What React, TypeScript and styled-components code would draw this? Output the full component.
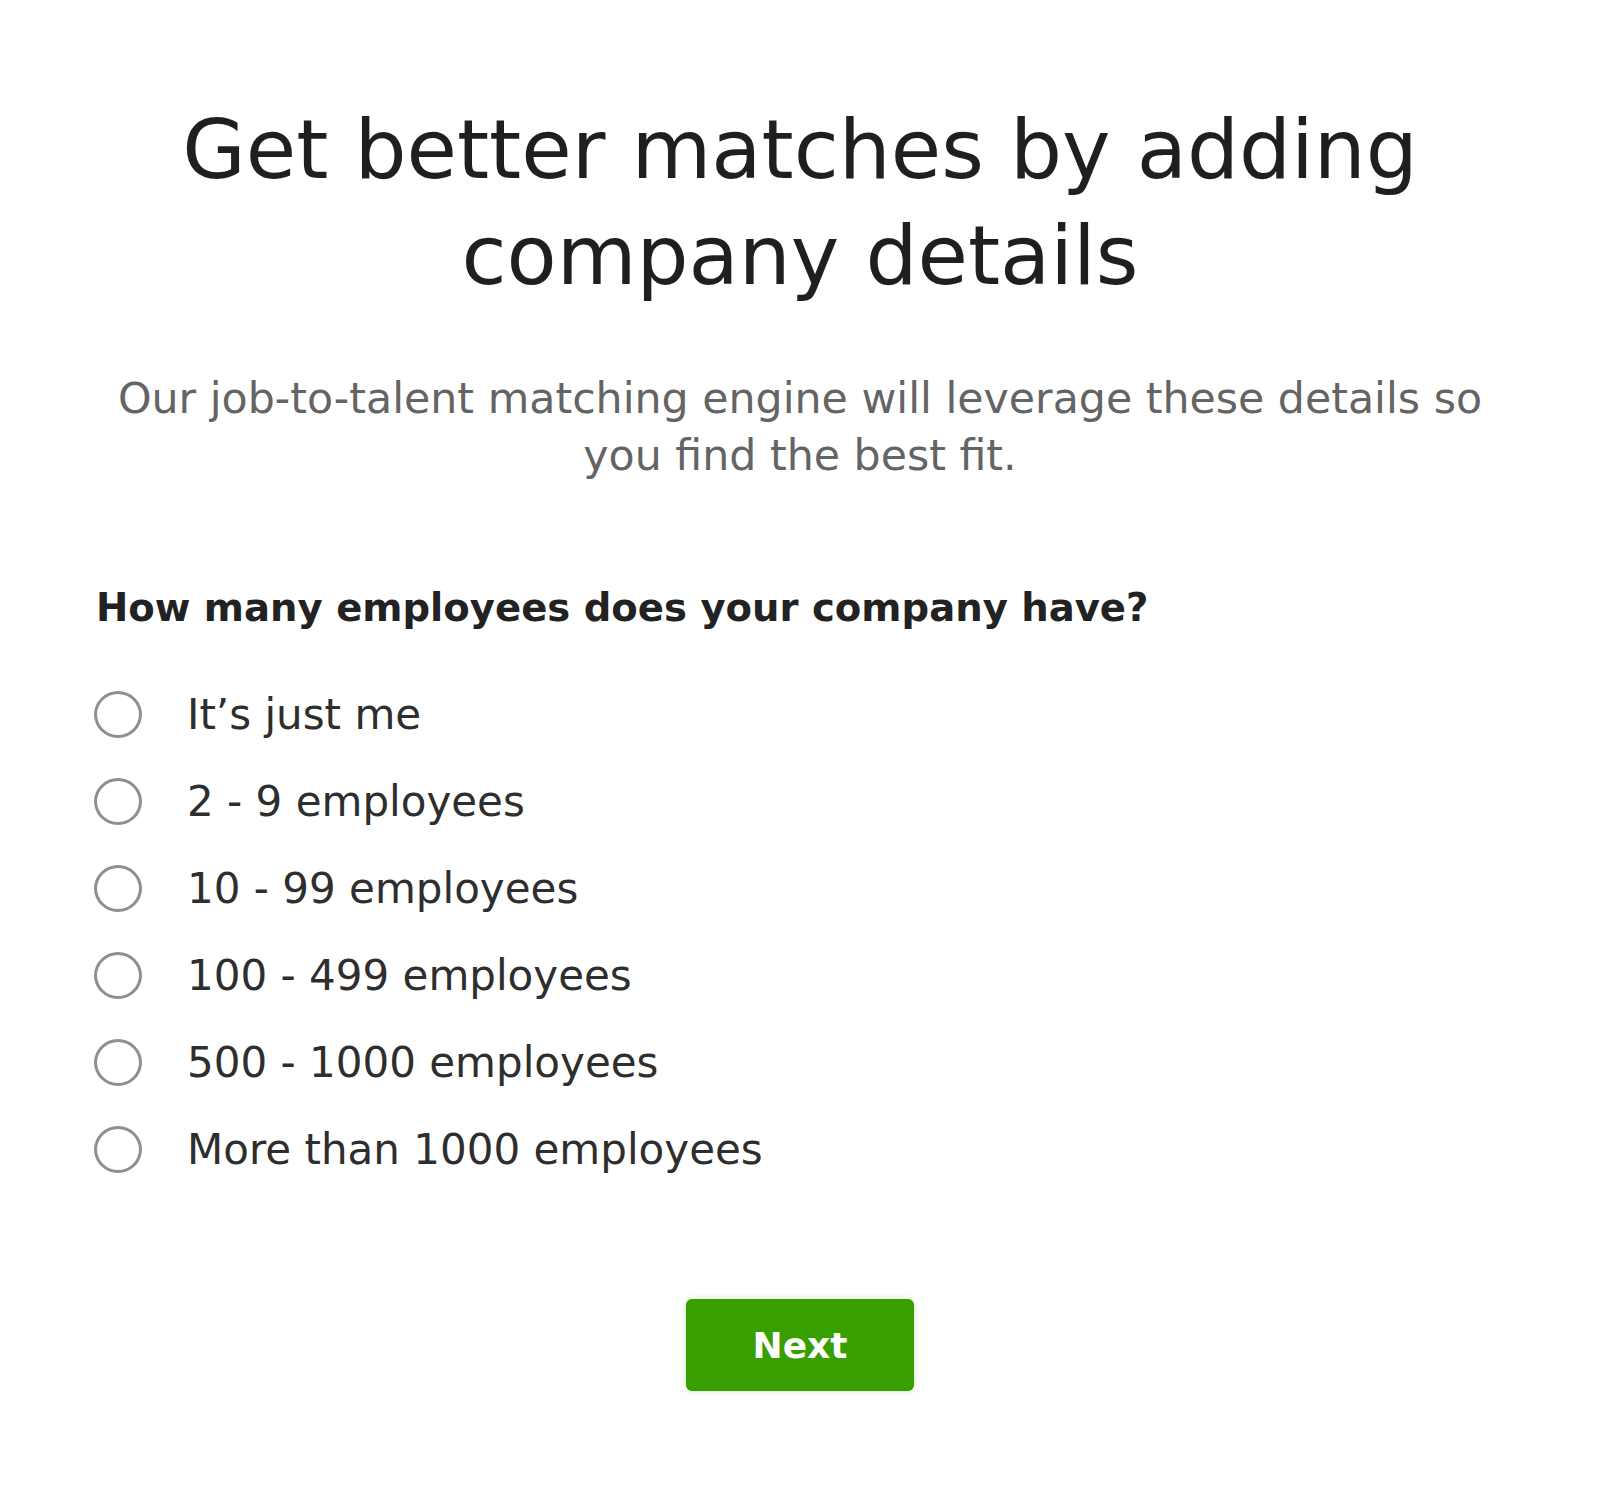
import React, { useState } from "react";
import styled, { createGlobalStyle } from "styled-components";

const GlobalStyle = createGlobalStyle`
  html, body {
    margin: 0;
    padding: 0;
    background: #ffffff;
  }
  body {
    font-family: "DejaVu Sans", "Liberation Sans", sans-serif;
    color: #222222;
  }
`;

const Page = styled.main`
  width: 1412px;
  margin: 0 auto;
  padding: 97px 0 80px;
  display: flex;
  flex-direction: column;
  align-items: center;
`;

const Title = styled.h1`
  margin: 0;
  width: 1300px;
  font-size: 82px;
  line-height: 106px;
  font-weight: 400;
  color: #1f1f1f;
  text-align: center;
`;

const Subtitle = styled.p`
  margin: 61px 0 0;
  width: 1412px;
  font-size: 42.7px;
  line-height: 57px;
  font-weight: 400;
  color: #646464;
  text-align: center;
`;

const Form = styled.form`
  align-self: stretch;
  margin-top: 101px;
  display: flex;
  flex-direction: column;
`;

const Question = styled.h2`
  margin: 0 0 40px 2px;
  font-size: 38.6px;
  line-height: 46px;
  font-weight: 700;
  color: #222222;
`;

const OptionList = styled.div`
  display: flex;
  flex-direction: column;
`;

const OptionRow = styled.label`
  height: 87px;
  display: flex;
  align-items: center;
  gap: 45px;
  cursor: pointer;
`;

const RadioCircle = styled.span<{ $checked: boolean }>`
  width: 48px;
  height: 47px;
  box-sizing: border-box;
  border-radius: 50%;
  border: 3px solid #8f8f8f;
  background: #fff;
  flex: 0 0 auto;
  display: flex;
  align-items: center;
  justify-content: center;
  &::after {
    content: "";
    width: 22px;
    height: 22px;
    border-radius: 50%;
    background: #37a000;
    display: ${(p) => (p.$checked ? "block" : "none")};
  }
`;

const HiddenInput = styled.input`
  position: absolute;
  opacity: 0;
  width: 0;
  height: 0;
`;

const OptionText = styled.span`
  font-size: 42px;
  line-height: 87px;
  color: #2e2e2e;
`;

const Actions = styled.div`
  display: flex;
  justify-content: center;
  margin-top: 106px;
`;

const NextButton = styled.button`
  width: 228px;
  height: 92px;
  border: none;
  border-radius: 6px;
  background: #37a000;
  color: #ffffff;
  font-family: "DejaVu Sans", "Liberation Sans", sans-serif;
  font-size: 36px;
  font-weight: 700;
  cursor: pointer;
  box-shadow: 0 0 6px rgba(55, 160, 0, 0.25);
`;

const options = [
  "It\u2019s just me",
  "2 - 9 employees",
  "10 - 99 employees",
  "100 - 499 employees",
  "500 - 1000 employees",
  "More than 1000 employees",
];

export default function App() {
  const [selected, setSelected] = useState<number | null>(null);
  return (
    <>
      <GlobalStyle />
      <Page>
        <Title>Get better matches by adding company details</Title>
        <Subtitle>
          Our job-to-talent matching engine will leverage these details so you find the best fit.
        </Subtitle>
        <Form onSubmit={(e) => e.preventDefault()}>
          <Question>How many employees does your company have?</Question>
          <OptionList>
            {options.map((o, i) => (
              <OptionRow key={o}>
                <HiddenInput
                  type="radio"
                  name="size"
                  checked={selected === i}
                  onChange={() => setSelected(i)}
                />
                <RadioCircle $checked={selected === i} />
                <OptionText>{o}</OptionText>
              </OptionRow>
            ))}
          </OptionList>
          <Actions>
            <NextButton type="submit">Next</NextButton>
          </Actions>
        </Form>
      </Page>
    </>
  );
}
